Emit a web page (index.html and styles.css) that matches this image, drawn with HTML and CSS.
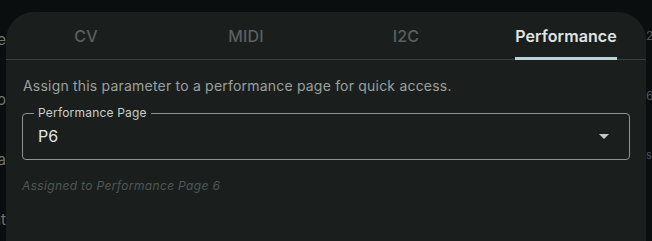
FILE: index.html
```html
<!DOCTYPE html>
<html>
<head>
<meta charset="utf-8">
<link rel="stylesheet" href="styles.css">
</head>
<body>
<div class="backdrop">
  <div class="ghost ghost-left">
    <div class="ghost-line"><span>Name</span></div>
    <div class="ghost-line"><span>Mono</span></div>
    <div class="ghost-line"><span>Delta</span></div>
    <div class="ghost-line"><span>Output</span></div>
  </div>
  <div class="ghost ghost-right">
    <div class="ghost-line"><span>2</span></div>
    <div class="ghost-line"><span>6</span></div>
    <div class="ghost-line small"><span>ss</span></div>
  </div>
</div>
<div class="dialog">
  <div class="tabs">
    <div class="tab">CV</div>
    <div class="tab">MIDI</div>
    <div class="tab">I2C</div>
    <div class="tab active"><span class="tab-label">Performance</span></div>
  </div>
  <div class="content">
    <p class="desc">Assign this parameter to a performance page for quick access.</p>
    <fieldset class="field">
      <legend>Performance Page</legend>
      <div class="select-row">
        <span class="value">P6</span>
        <svg class="arrow" width="10" height="5" viewBox="0 0 10 5"><path d="M0 0 L10 0 L5 5 Z" fill="#c3cac9"/></svg>
      </div>
    </fieldset>
    <p class="helper">Assigned to Performance Page 6</p>
  </div>
</div>
</body>
</html>
```
FILE: styles.css
```css
html, body {
  margin: 0;
  padding: 0;
}
body {
  width: 652px;
  height: 241px;
  overflow: hidden;
  background: #0a0e0e;
  font-family: Inter, "Noto Sans", sans-serif;
  position: relative;
}
.backdrop {
  display: flex;
  justify-content: space-between;
  height: 241px;
}
.ghost {
  display: flex;
  flex-direction: column;
  overflow: hidden;
  color: #6f7474;
  font-size: 15px;
}
.ghost-left {
  width: 6px;
  padding-top: 30px;
  gap: 42px;
}
.ghost-right {
  width: 6px;
  padding-top: 28px;
  gap: 42px;
  color: #4f5555;
  font-size: 12px;
}
.ghost-line {
  height: 18px;
  display: flex;
  justify-content: flex-end;
  white-space: nowrap;
}
.ghost-right .ghost-line {
  justify-content: flex-start;
}
.ghost-line.small {
  font-size: 11px;
}
.dialog {
  position: absolute;
  left: 6px;
  top: 12px;
  width: 640px;
  height: 240px;
  background: #1a1f1e;
  border-radius: 28px 28px 0 0;
}
.tabs {
  display: grid;
  grid-template-columns: repeat(4, 1fr);
  height: 47px;
  border-bottom: 1px solid #3a403f;
}
.tab {
  display: flex;
  align-items: center;
  justify-content: center;
  font-size: 16px;
  font-weight: 500;
  color: #5a605f;
  letter-spacing: 0.1px;
}
.tab.active {
  color: #e0e4e3;
  font-weight: 600;
  align-items: stretch;
}
.tab-label {
  display: flex;
  align-items: center;
  border-bottom: 3px solid #b8d2d5;
  margin-bottom: -1px;
  padding-top: 2px;
}
.content {
  padding: 0 16px;
}
.desc {
  margin: 16px 0 0;
  font-size: 14px;
  line-height: 20px;
  letter-spacing: 0.2px;
  color: #9ba09f;
  padding-left: 1px;
}
.field {
  margin: 10px 0 0;
  border: 1px solid #8e9493;
  border-radius: 4px;
  padding: 0 20px 0 15px;
  height: 54px;
  box-sizing: border-box;
}
.field legend {
  font-size: 12px;
  color: #c9cdcc;
  padding: 0 4px;
  margin-left: -4px;
  line-height: 14px;
  letter-spacing: 0.2px;
}
.select-row {
  display: flex;
  align-items: center;
  justify-content: space-between;
  height: 30px;
  margin-top: 1px;
}
.value {
  font-size: 16px;
  color: #e2e6e5;
}
.arrow {
  display: block;
}
.helper {
  margin: 18px 0 0;
  font-size: 12px;
  font-style: italic;
  letter-spacing: 0.35px;
  color: #505756;
}
```
